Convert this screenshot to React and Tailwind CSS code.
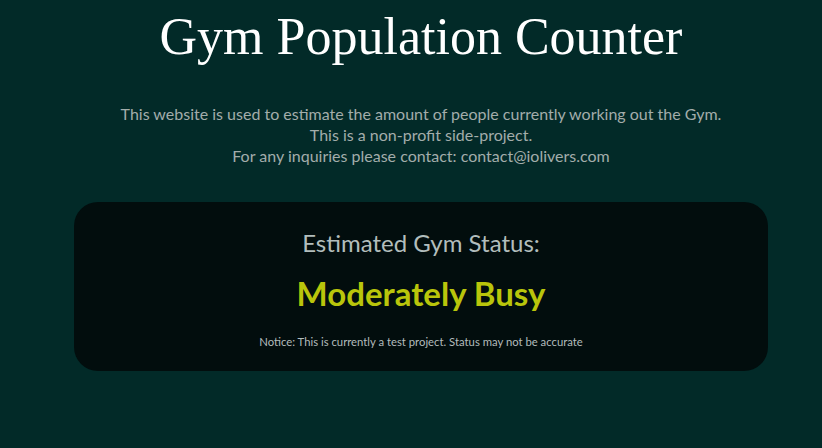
import React from 'react';

const App = () => {
    return (
        <div className="min-h-screen w-full bg-[#022a28] pl-[20px] pt-[5px]" style={{ fontFamily: 'Lato, "Open Sans", sans-serif' }}>
            <h1 className="text-center text-[52px] leading-[64px] text-white" style={{ fontFamily: '"Liberation Serif", "DejaVu Serif", serif' }}>
                Gym Population Counter
            </h1>

            <div className="mt-[34px] text-center text-[16px] leading-[21px] text-[#a3adab]">
                <p>This website is used to estimate the amount of people currently working out the Gym.</p>
                <p>This is a non-profit side-project.</p>
                <p>For any inquiries please contact: contact@iolivers.com</p>
            </div>

            <div className="mx-auto mt-[36px] w-[694px] rounded-[24px] bg-[#020d0d] pt-[26px] pb-[22px] text-center">
                <h2 className="text-[24px] leading-[30px] text-[#b2bdbc]">Estimated Gym Status:</h2>
                <p className="mt-[15px] text-[33px] font-bold leading-[40px] text-[#b9c50b]">Moderately Busy</p>
                <p className="mt-[22px] text-[11.3px] leading-[14px] text-[#b3bcbc]">
                    Notice: This is currently a test project. Status may not be accurate
                </p>
            </div>
        </div>
    );
};

export default App;
